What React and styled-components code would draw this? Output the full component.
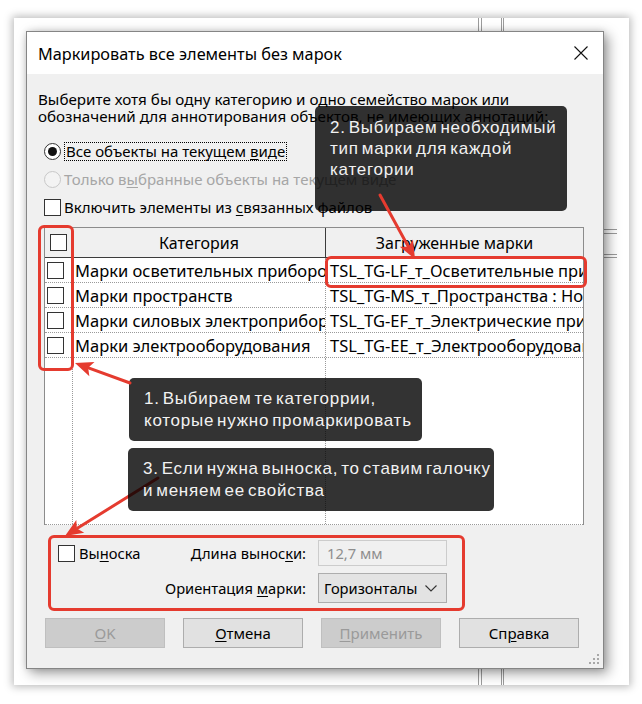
import React from "react";
import styled, { createGlobalStyle } from "styled-components";

const RED = "#e53b2f";

const GlobalStyle = createGlobalStyle`
  html, body { margin: 0; padding: 0; background: #ffffff; }
  body { font-family: "Noto Sans", "Open Sans", sans-serif; color: #000; }
  * { box-sizing: border-box; }
`;

const Stage = styled.div`
  position: relative;
  width: 642px;
  height: 704px;
  padding: 18px 0 0 14px;
  overflow: hidden;
  background: #ffffff;
`;

const Shot = styled.div`
  position: relative;
  width: 615px;
  height: 667px;
  padding: 13px 0 0 12px;
  background: #ffffff;
  box-shadow: 0 0 8px 2px rgba(0, 0, 0, 0.26);
`;

const Backdrop = styled.svg`
  position: absolute;
  left: 0;
  top: 0;
  width: 615px;
  height: 667px;
`;

const Dialog = styled.div`
  position: relative;
  width: 578px;
  height: 638px;
  display: flex;
  flex-direction: column;
  background: #f0f0f0;
  border: 1px solid #858585;
  box-shadow: 4px 4px 12px rgba(0, 0, 0, 0.4), 0 0 6px rgba(0, 0, 0, 0.12);
`;

const TitleBar = styled.div`
  flex: none;
  height: 42px;
  display: flex;
  align-items: center;
  justify-content: space-between;
  padding: 0 15px 0 11px;
  background: #ffffff;
`;

const Title = styled.div`
  font-size: 16.3px;
  line-height: 20px;
  margin-top: 1px;
`;

const Body = styled.div`
  flex: 1;
  display: flex;
  flex-direction: column;
  padding: 17px 18px 0 17px;
  font-size: 15px;
`;

const Intro = styled.p`
  margin: 0 0 0 -6px;
  line-height: 17px;
  font-size: 15.2px;
`;

const Options = styled.div`
  margin-top: 12px;
  display: flex;
  flex-direction: column;
`;

const OptionRow = styled.div`
  height: 28px;
  display: flex;
  align-items: center;
  gap: 3px;
  color: ${(p) => (p.$disabled ? "#a6a6a6" : "#000")};
`;

const Radio = styled.span`
  flex: none;
  width: 17px;
  height: 17px;
  display: flex;
  align-items: center;
  justify-content: center;
  border-radius: 50%;
  border: 1px solid ${(p) => (p.$disabled ? "#c8c8c8" : "#333")};
  background: ${(p) => (p.$disabled ? "#f3f3f3" : "#fff")};
  &::after {
    content: "";
    display: ${(p) => (p.$checked ? "block" : "none")};
    width: 9px;
    height: 9px;
    border-radius: 50%;
    background: #111;
  }
`;

const Check = styled.span`
  flex: none;
  display: block;
  width: 17px;
  height: 17px;
  background: #fff;
  border: 1px solid #333;
`;

const Focused = styled.span`
  border: 1px dotted #000;
  padding: 0 1px;
  line-height: 17px;
`;

const Key = styled.span`
  text-decoration: underline;
  text-underline-offset: 2px;
`;

const Grid = styled.div`
  margin-top: 6px;
  width: 540px;
  height: 298px;
  display: flex;
  flex-direction: column;
  background: #ffffff;
  border-left: 1px solid #8c8c8c;
  border-top: 1px solid #8c8c8c;
  border-right: 1px solid #8c8c8c;
  overflow: hidden;
  font-size: 16.5px;
`;

const Row = styled.div`
  flex: ${(p) => (p.$fill ? "1" : "none")};
  height: ${(p) => (p.$fill ? "auto" : `${p.$h}px`)};
  display: grid;
  grid-template-columns: 28px 253px 1fr;
  background: ${(p) => (p.$head ? "#f0f0f0" : "#ffffff")};
  border-bottom: 1px ${(p) => (p.$head ? "solid #3c3c3c" : "dotted #9a9a9a")};
`;

const Cell = styled.div`
  min-width: 0;
  display: flex;
  align-items: center;
  justify-content: ${(p) => p.$align || "flex-start"};
  padding-left: ${(p) => p.$pad || 0}px;
  white-space: nowrap;
  overflow: hidden;
  font-size: ${(p) => (p.$head ? "16px" : "inherit")};
  border-right: 1px ${(p) => (p.$head ? "solid #3c3c3c" : "dotted #9a9a9a")};
  &:last-child {
    border-right: none;
  }
`;

const Leader = styled.div`
  margin-top: 15px;
  display: grid;
  grid-template-columns: 262px 129px;
  grid-template-rows: 26px 30px;
  column-gap: 12px;
  row-gap: 7px;
  align-items: center;
  font-size: 14.7px;
`;

const LabelCell = styled.div`
  display: flex;
  align-items: center;
  justify-content: ${(p) => (p.$split ? "space-between" : "flex-end")};
  padding-left: ${(p) => (p.$split ? 14 : 0)}px;
`;

const CheckLabel = styled.div`
  display: flex;
  align-items: center;
  gap: 4px;
`;

const Field = styled.div`
  height: 26px;
  display: flex;
  align-items: center;
  padding-left: 8px;
  background: #f0f0f0;
  border: 1px solid #cccccc;
  color: #8e8e8e;
`;

const Select = styled.div`
  height: 30px;
  display: flex;
  align-items: center;
  justify-content: space-between;
  padding: 0 9px 0 5px;
  background: #e3e3e3;
  border: 1px solid #adadad;
`;

const Buttons = styled.div`
  margin-top: 15px;
  margin-left: 1px;
  display: flex;
  gap: 18px;
`;

const Button = styled.div`
  width: 120px;
  height: 30px;
  display: flex;
  align-items: center;
  justify-content: center;
  font-size: 15px;
  background: ${(p) => (p.$disabled ? "#cccccc" : "#e1e1e1")};
  border: 1px solid ${(p) => (p.$disabled ? "#bfbfbf" : "#adadad")};
  color: ${(p) => (p.$disabled ? "#9a9a9a" : "#000")};
`;

const Grip = styled.svg`
  position: absolute;
  right: 3px;
  bottom: 3px;
`;

const Note = styled.div`
  position: absolute;
  left: ${(p) => p.$x}px;
  top: ${(p) => p.$y}px;
  width: ${(p) => p.$w}px;
  height: ${(p) => p.$h}px;
  padding: ${(p) => p.$pt}px 0 0 15px;
  border-radius: 5px;
  background: rgba(0, 0, 0, 0.8);
  color: #f2f2f2;
  font-family: "Liberation Sans", Arial, sans-serif;
  font-size: 17px;
  letter-spacing: 0.75px;
  word-spacing: -2.5px;
  line-height: ${(p) => p.$lh}px;
  white-space: nowrap;
`;

const Mark = styled.div`
  position: absolute;
  left: ${(p) => p.$x}px;
  top: ${(p) => p.$y}px;
  width: ${(p) => p.$w}px;
  height: ${(p) => p.$h}px;
  border: 3px solid ${RED};
  border-radius: 6px;
`;

const Ink = styled.svg`
  position: absolute;
  left: 0;
  top: 0;
  width: 642px;
  height: 704px;
  pointer-events: none;
`;

function Arrow({ from, to, head = 18, spread = 7.5 }) {
  const [x1, y1] = from;
  const [x2, y2] = to;
  const len = Math.hypot(x2 - x1, y2 - y1);
  const ux = (x2 - x1) / len;
  const uy = (y2 - y1) / len;
  const bx = x2 - ux * head;
  const by = y2 - uy * head;
  const px = -uy * spread;
  const py = ux * spread;
  return (
    <g>
      <line x1={x1} y1={y1} x2={bx + ux * 3} y2={by + uy * 3} stroke={RED} strokeWidth="3" strokeLinecap="round" />
      <polygon points={`${x2},${y2} ${bx + px},${by + py} ${bx + ux * 4},${by + uy * 4} ${bx - px},${by - py}`} fill={RED} />
    </g>
  );
}

const rows = [
  ["Марки осветительных приборов", "TSL_TG-LF_т_Осветительные приборы"],
  ["Марки пространств", "TSL_TG-MS_т_Пространства : Номер"],
  ["Марки силовых электроприборов", "TSL_TG-EF_т_Электрические приборы"],
  ["Марки электрооборудования", "TSL_TG-EE_т_Электрооборудование"],
];

export default function App() {
  return (
    <>
      <GlobalStyle />
      <Stage>
        <Shot>
          <Backdrop viewBox="0 0 615 667">
            <g stroke="#9c9c9c" strokeWidth="1">
              <line x1="464.5" y1="0" x2="464.5" y2="667" />
              <line x1="467.5" y1="0" x2="467.5" y2="667" />
              <line x1="487.5" y1="0" x2="487.5" y2="667" />
              <line x1="489.5" y1="0" x2="489.5" y2="667" />
              <line x1="560" y1="211.5" x2="603" y2="211.5" />
              <line x1="560" y1="215.5" x2="603" y2="215.5" />
              <line x1="560" y1="236.5" x2="603" y2="236.5" />
              <line x1="560" y1="239.5" x2="603" y2="239.5" />
            </g>
          </Backdrop>
          <Dialog>
            <TitleBar>
              <Title>Маркировать все элементы без марок</Title>
              <svg width="14" height="14" viewBox="0 0 14 14">
                <path d="M0.5 0.5 L13.5 13.5 M13.5 0.5 L0.5 13.5" stroke="#111" strokeWidth="1.1" fill="none" />
              </svg>
            </TitleBar>
            <Body>
              <Intro>
                Выберите хотя бы одну категорию и одно семейство марок или
                <br />
                обозначений для аннотирования объектов, не имеющих аннотаций:
              </Intro>
              <Options>
                <OptionRow>
                  <Radio $checked />
                  <Focused>
                    Все объекты на текущем <Key>в</Key>иде
                  </Focused>
                </OptionRow>
                <OptionRow $disabled>
                  <Radio $disabled />
                  <span>
                    Только в<Key>ы</Key>бранные объекты на текущем виде
                  </span>
                </OptionRow>
                <OptionRow>
                  <Check />
                  <span>
                    Включить элементы из <Key>с</Key>вязанных файлов
                  </span>
                </OptionRow>
              </Options>
              <Grid>
                <Row $head $h={30}>
                  <Cell $head $align="center">
                    <Check />
                  </Cell>
                  <Cell $head $align="center">Категория</Cell>
                  <Cell $head $align="center">Загруженные марки</Cell>
                </Row>
                {rows.map(([cat, tag]) => (
                  <Row key={cat} $h={25}>
                    <Cell $pad={2}>
                      <Check />
                    </Cell>
                    <Cell $pad={2}>{cat}</Cell>
                    <Cell $pad={4}>{tag}</Cell>
                  </Row>
                ))}
                <Row $fill>
                  <Cell />
                  <Cell />
                  <Cell />
                </Row>
              </Grid>
              <Leader>
                <LabelCell $split>
                  <CheckLabel>
                    <Check />
                    <span>
                      Вы<Key>н</Key>оска
                    </span>
                  </CheckLabel>
                  <span>
                    Длина вынос<Key>к</Key>и:
                  </span>
                </LabelCell>
                <Field>12,7 мм</Field>
                <LabelCell>
                  <span>
                    Ориентация <Key>м</Key>арки:
                  </span>
                </LabelCell>
                <Select>
                  <span>Горизонталы</span>
                  <svg width="12" height="7" viewBox="0 0 12 7">
                    <path d="M0.5 0.5 L6 6 L11.5 0.5" stroke="#333" strokeWidth="1.1" fill="none" />
                  </svg>
                </Select>
              </Leader>
              <Buttons>
                <Button $disabled>
                  <span>
                    <Key>O</Key>K
                  </span>
                </Button>
                <Button>
                  <span>
                    <Key>О</Key>тмена
                  </span>
                </Button>
                <Button $disabled>
                  <span>
                    <Key>П</Key>рименить
                  </span>
                </Button>
                <Button>
                  <span>
                    Сп<Key>р</Key>авка
                  </span>
                </Button>
              </Buttons>
            </Body>
            <Grip width="11" height="11" viewBox="0 0 11 11">
              <g fill="#a8a8a8">
                <rect x="8" y="0" width="2" height="2" />
                <rect x="4" y="4" width="2" height="2" />
                <rect x="8" y="4" width="2" height="2" />
                <rect x="0" y="8" width="2" height="2" />
                <rect x="4" y="8" width="2" height="2" />
                <rect x="8" y="8" width="2" height="2" />
              </g>
            </Grip>
          </Dialog>
        </Shot>

        <Mark $x={38} $y={225} $w={36} $h={146} />
        <Mark $x={325} $y={256} $w={262} $h={32} />
        <Mark $x={48} $y={535} $w={417} $h={76} />

        <Ink viewBox="0 0 642 704">
          <Arrow from={[158, 478]} to={[65, 536]} />
        </Ink>

        <Note $x={315} $y={106} $w={252} $h={105} $pt={11} $lh={21}>
          2. Выбираем необходимый
          <br />
          тип марки для каждой
          <br />
          категории
        </Note>
        <Note $x={129} $y={378} $w={293} $h={63} $pt={10} $lh={22}>
          1. Выбираем те категоррии,
          <br />
          которые нужно промаркировать
        </Note>
        <Note $x={128} $y={448} $w={366} $h={63} $pt={10} $lh={22}>
          3. Если нужна выноска, то ставим галочку
          <br />
          и меняем ее свойства
        </Note>

        <Ink viewBox="0 0 642 704">
          <Arrow from={[380, 195]} to={[415, 259]} />
          <Arrow from={[130, 383]} to={[75, 363]} />
        </Ink>
      </Stage>
    </>
  );
}
